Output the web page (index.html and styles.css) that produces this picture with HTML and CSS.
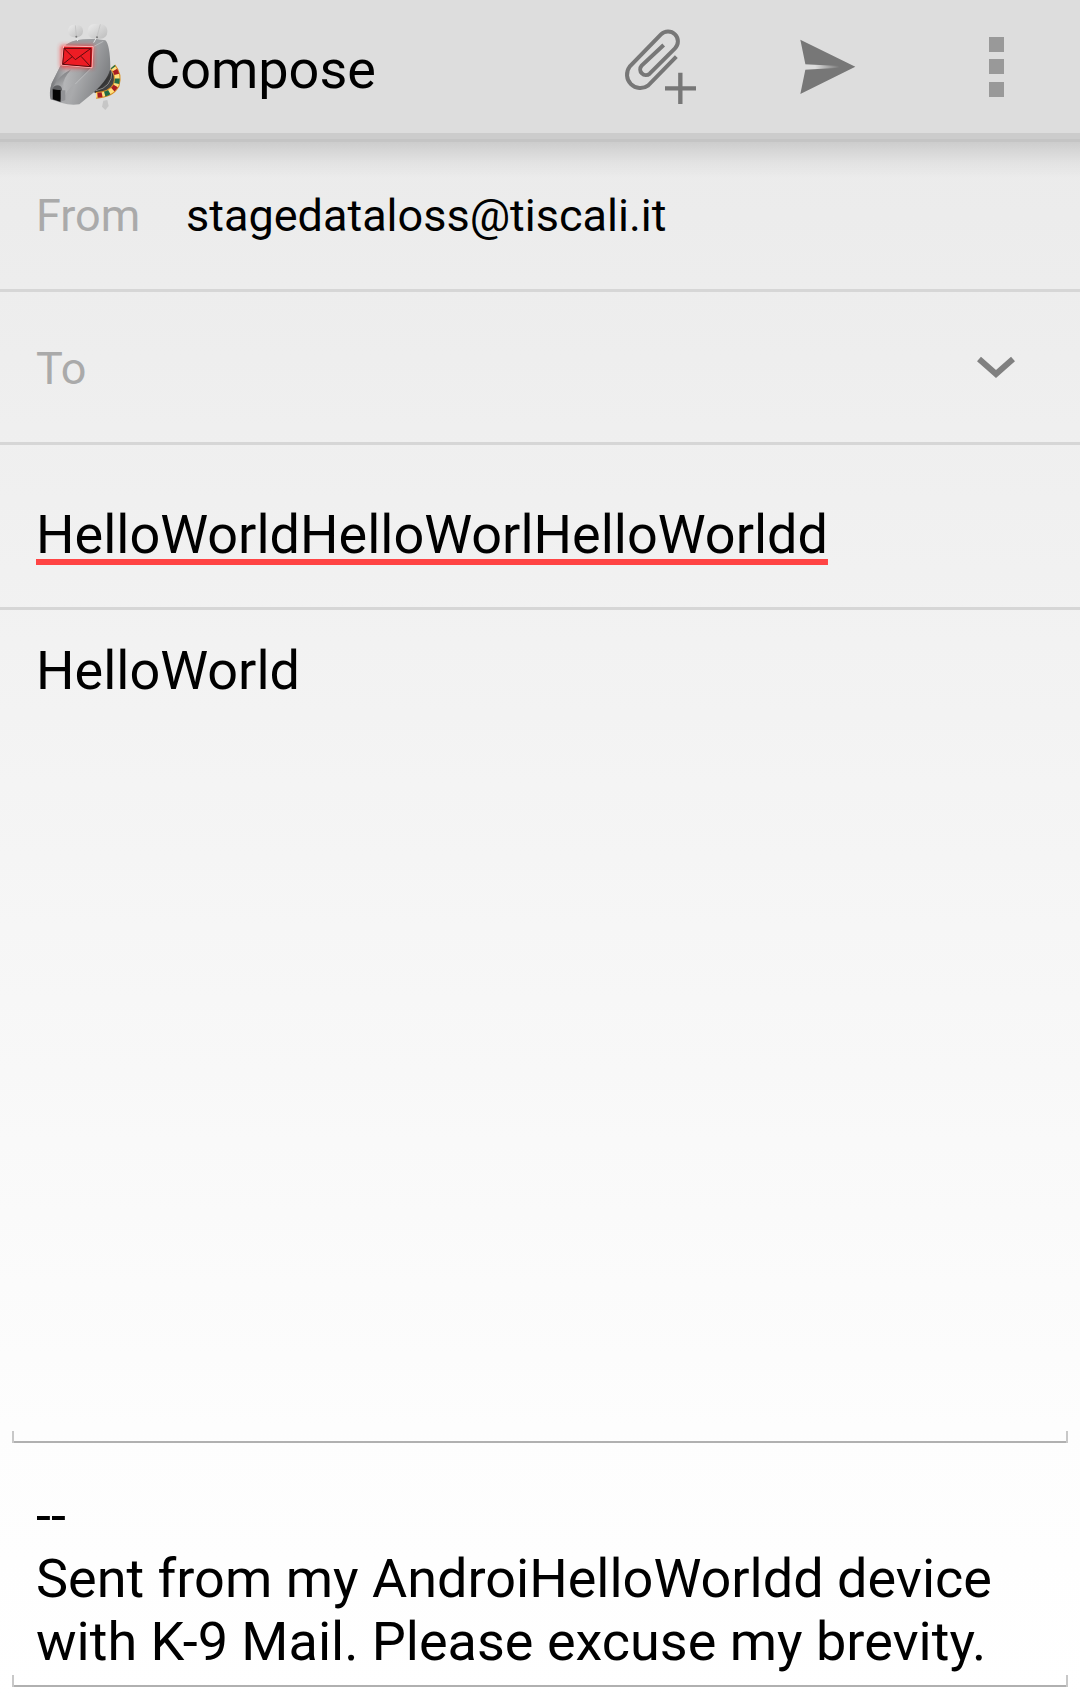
FILE: index.html
```html
<!DOCTYPE html>
<html lang="en">
<head>
<meta charset="utf-8">
<meta name="viewport" content="width=device-width, initial-scale=1">
<title>Compose</title>
<link rel="stylesheet" href="styles.css">
</head>
<body>
<form class="compose">
  <header class="bar">
    <svg class="logo" viewBox="0 0 330 330" aria-hidden="true">
      <defs>
        <linearGradient id="head" x1="0" y1="0.3" x2="1" y2="0.7">
          <stop offset="0" stop-color="#a4a4a6"/><stop offset="0.5" stop-color="#a9aaac"/><stop offset="1" stop-color="#77797c"/>
        </linearGradient>
        <linearGradient id="snout" x1="0" y1="0.5" x2="1" y2="0.6">
          <stop offset="0" stop-color="#717275"/><stop offset="0.35" stop-color="#b4b5b7"/><stop offset="0.7" stop-color="#a2a3a5"/><stop offset="1" stop-color="#7b7c7f"/>
        </linearGradient>
        <linearGradient id="ridge" x1="0" y1="0" x2="0.6" y2="1">
          <stop offset="0" stop-color="#68696c"/><stop offset="1" stop-color="#b0b1b3"/>
        </linearGradient>
        <linearGradient id="neck" x1="0" y1="0" x2="1" y2="1">
          <stop offset="0" stop-color="#999"/><stop offset="0.5" stop-color="#333"/><stop offset="1" stop-color="#666"/>
        </linearGradient>
        <linearGradient id="ear" x1="0" y1="0" x2="1" y2="1">
          <stop offset="0" stop-color="#ececec"/><stop offset="1" stop-color="#bcbcbc"/>
        </linearGradient>
        <filter id="glow" x="-30%" y="-30%" width="160%" height="160%"><feGaussianBlur stdDeviation="7"/></filter>
      </defs>
      <path d="M220 272 L232 270 L236 288 L226 300 L216 290Z" fill="#c6c6c6"/>
      <path d="M240 178 L256 200 Q252 244 214 256 L190 246Z" fill="url(#neck)"/>
      <path d="M246 184 Q246 232 198 242" fill="none" stroke="#888" stroke-width="3"/>
      <path d="M248 170 Q268 194 259 225 Q244 254 198 256" fill="none" stroke="#d98e20" stroke-width="20"/>
      <path d="M248 170 Q268 194 259 225 Q244 254 198 256" fill="none" stroke="#ffdf80" stroke-width="14"/>
      <path d="M248 170 Q268 194 259 225 Q244 254 198 256" fill="none" stroke="#a91d22" stroke-width="15" stroke-dasharray="14 36" stroke-dashoffset="-12"/>
      <path d="M248 170 Q268 194 259 225 Q244 254 198 256" fill="none" stroke="#236b45" stroke-width="15" stroke-dasharray="15 35" stroke-dashoffset="-39"/>
      <path d="M106 108 Q122 86 195 87 L226 91 Q240 104 241 172 Q238 206 190 248 L148 283 Q118 286 96 279 L62 268 Q56 250 65 220 L91 168Z" fill="url(#head)"/>
      <path d="M91 168 L184 174 L136 220 Q110 236 96 278 L62 268 Q56 250 65 220Z" fill="url(#snout)"/>
      <path d="M124 178 Q84 198 70 232 L96 232 Q100 204 124 178Z" fill="url(#ridge)"/>
      <path d="M106 108 Q122 86 195 87 L220 92 L188 110Z" fill="#9b9c9f"/>
      <path d="M220 94 L190 110 L186 172 L136 222" fill="none" stroke="#c6c7c9" stroke-width="2"/>
      <path d="M68 236 L96 240 L92 276 L68 268Z" fill="#050505"/>
      <path d="M68 238 Q70 226 84 226 Q96 228 96 241Z" fill="#606164"/>
      <path d="M92 241 H106 V270 L92 276Z" fill="#929396"/>
      <rect x="92" y="106" width="98" height="68" fill="#ff2a2a" opacity="0.75" filter="url(#glow)"/>
      <path d="M101 108 L189 110 L186 173 L95 165Z" fill="#ed1c24" stroke="#ffb8b8" stroke-width="3"/>
      <path d="M102 115 L183 115 L182 170 L98 163Z M102 115 L136 149 L183 115 M98 163 L127 140 M182 170 L153 139" fill="none" stroke="#5c0a0d" stroke-width="3"/>
      <rect x="114" y="44" width="45" height="38" rx="18" fill="url(#ear)"/>
      <rect x="173" y="42" width="59" height="44" rx="20" fill="url(#ear)"/>
      <path d="M136 46 L139 78 M211 43 L201 80" fill="none" stroke="#bdbdbd" stroke-width="2"/>
      <path d="M139 80 L143 93 M200 82 L191 98" stroke="#e6e6e6" stroke-width="3"/>
      <circle cx="139" cy="80" r="3" fill="#777"/><circle cx="201" cy="82" r="3" fill="#777"/>
    </svg>
    <h1 class="title">Compose</h1>
    <button class="action" type="button" aria-label="Add attachment">
      <svg viewBox="-72 -30 504 399">
        <path d="M229 140 L145 226 A40 40 0 0 1 89 170 L183 73 A29 29 0 0 1 225 115 L149 191 A17 17 0 0 1 125 167 L191 105" fill="none" stroke="#777" stroke-width="12"/>
        <path d="M195 235H288M241 188V282" stroke="#777" stroke-width="13"/>
      </svg>
    </button>
    <button class="action" type="submit" aria-label="Send">
      <svg viewBox="432 -30 504 399">
        <defs><linearGradient id="slot"><stop offset="0.3" stop-color="#ddd"/><stop offset="1" stop-color="#777"/></linearGradient></defs>
        <path d="M601 89 L766 170 L601 252 L616 179 V162Z" fill="#777"/>
        <path d="M614 163 L718 168 V173 L614 179Z" fill="url(#slot)"/>
      </svg>
    </button>
    <button class="action" type="button" aria-label="More options">
      <svg viewBox="912 0 168 133"><path d="M989 37h15v15h-15zM989 59h15v15h-15zM989 82h15v15h-15z" fill="#999"/></svg>
    </button>
  </header>
  <div class="row from">
    <label class="label" for="from">From</label>
    <input class="field" id="from" type="text" value="stagedataloss@tiscali.it" readonly>
  </div>
  <div class="row to">
    <input class="field" type="text" placeholder="To" aria-label="To">
    <button class="expand" type="button" aria-label="Show Cc and Bcc">
      <svg viewBox="0 0 168 54"><path d="M67 17 L84 32 L101 17" fill="none" stroke="#808080" stroke-width="6"/></svg>
    </button>
  </div>
  <div class="row subject">
    <input class="field misspelled" type="text" value="HelloWorldHelloWorlHelloWorldd" aria-label="Subject" spellcheck="false">
  </div>
  <textarea class="text message" aria-label="Message text" spellcheck="false">HelloWorld</textarea>
  <textarea class="text signature" aria-label="Signature" rows="3" spellcheck="false">--
Sent from my AndroiHelloWorldd device with K-9 Mail. Please excuse my brevity.</textarea>
</form>
</body>
</html>
```
FILE: styles.css
```css
* {
  box-sizing: border-box;
}

body {
  margin: 0;
  color: #000;
  font-family: Roboto, sans-serif;
}

button,
input,
textarea {
  margin: 0;
  padding: 0;
  border: 0;
  outline: 0;
  background: none;
  color: inherit;
  font: inherit;
}

svg {
  display: block;
}

.compose {
  display: flex;
  flex-direction: column;
  min-height: 100vh;
  padding-bottom: 12px;
  background: linear-gradient(#e9e9e9, #fdfdfd 84%, #fff);
}

/* Action bar */
.bar {
  display: flex;
  align-items: center;
  height: 142px;
  padding-left: 30px;
  border-bottom: 3px solid #c4c4c4;
  background: linear-gradient(#ddd 133px, #ccc 133px);
}

.logo {
  width: 110px;
  height: 110px;
  margin-bottom: 9px;
}

.title {
  flex: 1;
  margin: 0 0 0 5px;
  font-size: 54px;
  font-weight: 400;
  line-height: 63px;
}

.action {
  align-self: flex-start;
  width: 168px;
  height: 133px;
}

.action svg {
  width: 168px;
  height: 133px;
}

/* Header fields */
.row {
  display: flex;
  border-bottom: 3px solid #d6d6d6;
  padding-left: 36px;
  font-size: 45px;
  line-height: 54px;
}

.from {
  padding-top: 47px;
  padding-bottom: 46px;
  background: linear-gradient(rgba(0, 0, 0, 0.13), rgba(0, 0, 0, 0.04) 20px, transparent 36px);
}

.to {
  padding-top: 50px;
  padding-bottom: 46px;
}

.subject {
  padding-top: 58px;
  padding-bottom: 41px;
  font-size: 54px;
  line-height: 63px;
}

.label {
  width: 150px;
  color: #aaa;
}

.field {
  flex: 1;
  min-width: 0;
  height: 54px;
}

.field::placeholder {
  color: #aaa;
  opacity: 1;
}

.misspelled {
  height: 63px;
  text-decoration: underline 6px #f44;
  text-decoration-skip-ink: none;
  text-underline-offset: 6px;
}

.expand,
.expand svg {
  width: 168px;
  height: 54px;
}

/* Text areas, with an underline that turns up at both ends */
.text {
  display: block;
  margin: 0 12px;
  padding: 0 24px;
  background:
    linear-gradient(#b0b0b0, #b0b0b0) bottom / calc(100% - 4px) 2px no-repeat,
    linear-gradient(#c8c8c8, #c8c8c8) left bottom / 2px 12px no-repeat,
    linear-gradient(#c8c8c8, #c8c8c8) right bottom / 2px 12px no-repeat;
  font-size: 54px;
  line-height: 63px;
  resize: none;
  overflow: hidden;
}

.message {
  flex: 1;
  padding-top: 29px;
}

.signature {
  padding-top: 41px;
  padding-bottom: 14px;
}
```
